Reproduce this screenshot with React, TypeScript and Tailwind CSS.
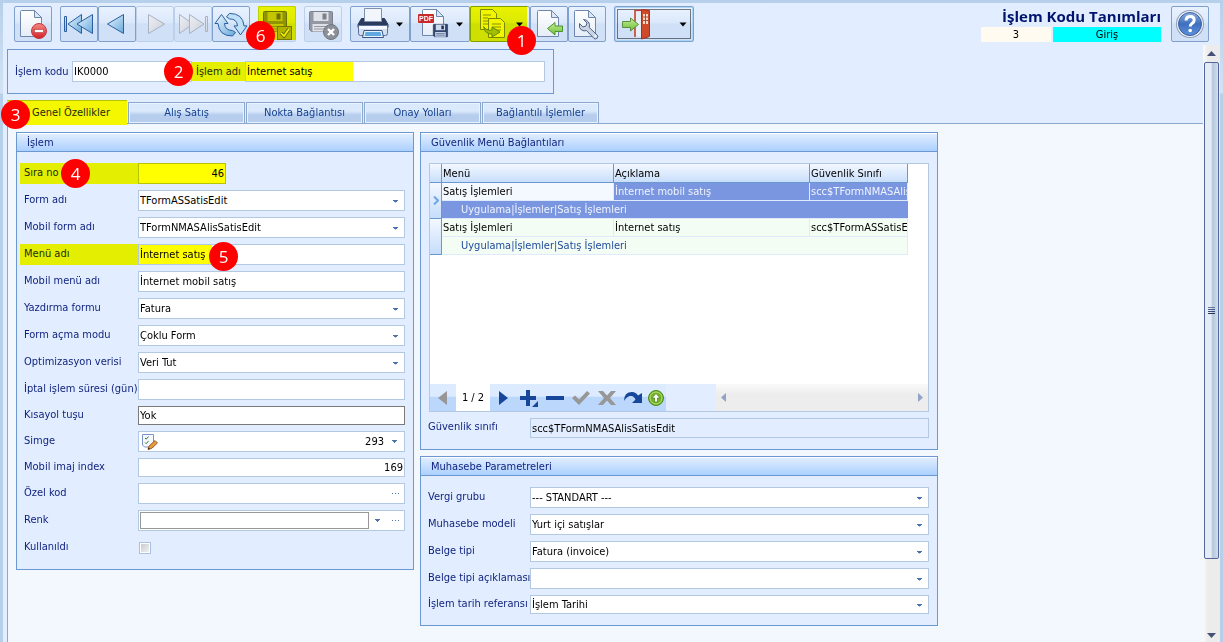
import { useId, type ReactNode } from "react";

/* ---------- shared pieces ---------- */

function Badge({ n, className }: { n: number; className: string }) {
  return (
    <span
      className={`absolute z-20 flex size-[29px] items-center justify-center rounded-full bg-[#fe0000] font-['Open_Sans','Noto_Sans',sans-serif] text-[17px] leading-none text-white ${className}`}
    >
      {n}
    </span>
  );
}

function Caret({ className = "" }: { className?: string }) {
  return (
    <svg viewBox="0 0 5 3" className={`h-[3px] w-[5px] fill-[#4a74ab] ${className}`} shapeRendering="crispEdges">
      <path d="M0 0h5v1h-1v1h-1v1h-1v-1h-1v-1h-1z" />
    </svg>
  );
}

function Dots() {
  return (
    <svg viewBox="0 0 7 1" className="h-px w-[7px] fill-[#4a74ab]" shapeRendering="crispEdges">
      <path d="M0 0h1v1h-1zM3 0h1v1h-1zM6 0h1v1h-1z" />
    </svg>
  );
}

const LEFT = "grid-cols-[114px_minmax(0,1fr)]";
const RIGHT = "grid-cols-[102px_minmax(0,1fr)] -ml-px";
const FRAME = "w-full min-w-0 border text-black outline-none";
const BOX = `${FRAME} border-[#b3c8e3] bg-white`;

function Row({ label, id, hot, cols, children, badge }: { label: string; id: string; hot?: boolean; cols: string; children: ReactNode; badge?: ReactNode }) {
  return (
    <div className={`relative grid ${cols}`}>
      <label
        htmlFor={id}
        className={`flex items-center whitespace-nowrap pb-0.5 ${hot ? "-ml-1 bg-[#e3ee00] pl-1 text-[#1c2b10]" : "text-[#0d1f7c]"}`}
      >
        {label}
      </label>
      {children}
      {badge}
    </div>
  );
}

function TextRow({ label, value, cols = LEFT, field = "h-[21px] px-px", frame = BOX }: { label: string; value: string; cols?: string; field?: string; frame?: string }) {
  const id = useId();
  return (
    <Row label={label} id={id} cols={cols}>
      <input id={id} defaultValue={value} className={`${frame} ${field}`} />
    </Row>
  );
}

function SelectRow({ label, value, cols = LEFT, field = "h-[21px]" }: { label: string; value: string; cols?: string; field?: string }) {
  const id = useId();
  return (
    <Row label={label} id={id} cols={cols}>
      <div className="relative flex">
        <select id={id} defaultValue={value} className={`${BOX} appearance-none px-px ${field}`}>
          <option>{value}</option>
        </select>
        <Caret className="pointer-events-none absolute top-1/2 right-[7px] -translate-y-1/2" />
      </div>
    </Row>
  );
}

function Panel({ title, children }: { title: string; children: ReactNode }) {
  return (
    <section className="border border-[#6b98d0] bg-[#e2eeff]">
      <h2 className="flex h-[19px] items-center border-t border-b border-t-white border-b-[#6b98d0] bg-linear-to-b from-[#e0edff] to-[#acd0ff] px-2.5 text-[#0d1f7c]">
        {title}
      </h2>
      {children}
    </section>
  );
}

/* ---------- toolbar ---------- */

function ToolButton({ label, w = "w-[38px]", faded, children, look = "" }: { label: string; w?: string; faded?: boolean; children: ReactNode; look?: string }) {
  return (
    <button
      type="button"
      aria-label={label}
      disabled={faded}
      className={`relative h-9 shrink-0 rounded-xs border bg-linear-to-b from-[#e9f2ff] from-0% via-[#dce9fb] via-45% to-[#cfe0f7] to-50% ${faded ? "border-[#bdd0ea]" : "border-[#7fa0cb]"} ${w} ${look}`}
    >
      {children}
    </button>
  );
}

function Glyph({ children, w = 38 }: { children: ReactNode; w?: number }) {
  return (
    <svg viewBox={`0 0 ${w} 36`} className="absolute -top-px -left-px h-9 w-[calc(100%+2px)]">
      {children}
    </svg>
  );
}

function Sheet({ x = 0, y = 0 }: { x?: number; y?: number }) {
  return (
    <g transform={`translate(${x} ${y})`}>
      <path d="M.5 1.500Q.5.5 1.500.5H14.500L21.500 7.500V26.500H.5Z" fill="url(#sheet)" stroke="#6f87ad" />
      <path d="M14.500.5V7.500H21.500Z" fill="#dce7f5" stroke="#6f87ad" strokeLinejoin="round" />
    </g>
  );
}

function Floppy({ x = 0, y = 0, s = 1, body, edge, label }: { x?: number; y?: number; s?: number; body: string; edge: string; label: string }) {
  return (
    <g transform={`translate(${x} ${y}) scale(${s})`}>
      <path d="M.5 1.500Q.5.5 1.500.5H22.500Q23.500.5 23.500 1.500V20.500H2.500L.5 18.500Z" fill={body} stroke={edge} />
      <rect x="4.500" y="1" width="15" height="9" fill={label} />
      <rect x="13.500" y="2.500" width="4" height="6" fill={edge} />
      <rect x="3.500" y="13" width="17" height="7.500" fill={label} />
      <path d="M5 15.500h14M5 18h14" stroke={body} />
    </g>
  );
}

function Defs() {
  return (
    <svg className="absolute size-0" aria-hidden="true">
      <defs>
        <linearGradient id="sheet" x1="0" y1="0" x2="0" y2="1">
          <stop offset="0" stopColor="#ffffff" />
          <stop offset="1" stopColor="#e6edf7" />
        </linearGradient>
        <linearGradient id="blue" x1="0" y1="0" x2="1" y2="1">
          <stop offset="0" stopColor="#eef8ff" />
          <stop offset="1" stopColor="#66a9da" />
        </linearGradient>
        <linearGradient id="grey" x1="0" y1="0" x2="1" y2="1">
          <stop offset="0" stopColor="#eef0f4" />
          <stop offset="1" stopColor="#cbd0d8" />
        </linearGradient>
        <linearGradient id="green" x1="0" y1="0" x2="0" y2="1">
          <stop offset="0" stopColor="#c5ee9a" />
          <stop offset="1" stopColor="#6cbf35" />
        </linearGradient>
        <linearGradient id="red" x1="0" y1="0" x2="0" y2="1">
          <stop offset="0" stopColor="#f58b86" />
          <stop offset="1" stopColor="#d31f26" />
        </linearGradient>
        <linearGradient id="help" x1="0" y1="0" x2="0" y2="1">
          <stop offset="0" stopColor="#8fb0e2" />
          <stop offset=".5" stopColor="#3f6fbd" />
          <stop offset="1" stopColor="#5c92dc" />
        </linearGradient>
      </defs>
    </svg>
  );
}

const menuCaret = <path d="M46 16.500h7l-3.500 4z" fill="#000" />;
const cycleArrow = "M9.500 8.500 3 17.500H6Q7 30 20.500 30L23.500 26.500 20.500 24.500Q13 24.500 12.500 17.500H16Z";

function Toolbar() {
  const blue = { fill: "url(#blue)", stroke: "#2c5fa0", strokeLinejoin: "round" as const };
  const grey = { fill: "url(#grey)", stroke: "#a9b2c0", strokeLinejoin: "round" as const };
  return (
    <div role="toolbar" aria-label="Araçlar" className="flex gap-2">
      <ToolButton label="Sil">
        <Glyph>
          <Sheet x={6} y={4} />
          <circle cx="25" cy="25" r="7.500" fill="url(#red)" stroke="#c43a3f" />
          <rect x="20.500" y="23.500" width="9" height="3" fill="#fff" stroke="#b3383c" strokeWidth=".6" />
        </Glyph>
      </ToolButton>

      <div className="flex">
        <ToolButton label="İlk">
          <Glyph>
            <path d="M4.500 10.500h2v15h-2z" {...blue} />
            <path d="M8 18 21.500 8.500v19z" {...blue} />
            <path d="M17 18 32.500 8.500v19z" {...blue} />
          </Glyph>
        </ToolButton>
        <ToolButton label="Önceki">
          <Glyph>
            <path d="M9.500 18 25.500 8.500v19z" {...blue} />
          </Glyph>
        </ToolButton>
        <ToolButton label="Sonraki" faded>
          <Glyph>
            <path d="M28.500 18 12.500 8.500v19z" {...grey} />
          </Glyph>
        </ToolButton>
        <ToolButton label="Son" faded>
          <Glyph>
            <path d="M19 18 5.500 8.500v19z" {...grey} />
            <path d="M30 18 15.500 8.500v19z" {...grey} />
            <path d="M31.500 10.500h2v15h-2z" {...grey} />
          </Glyph>
        </ToolButton>
        <ToolButton label="Yenile">
          <Glyph>
            <path d={cycleArrow} {...blue} />
            <path d={cycleArrow} transform="rotate(180 19 18.700)" fill="#bfe0f6" stroke="#2c5fa0" strokeLinejoin="round" />
          </Glyph>
        </ToolButton>
      </div>

      <div className="relative flex">
        <ToolButton label="Kaydet" faded>
          <Glyph>
            <Floppy x={5} y={5} body="#90949c" edge="#6c7078" label="#c4c6ca" />
            <rect x="19.500" y="20.500" width="14" height="13" fill="#b0b2b5" stroke="#74777c" />
            <path d="M23 27l3 3 5-7" fill="none" stroke="#6c7078" strokeWidth="3.600" />
            <path d="M23 27l3 3 5-7" fill="none" stroke="#f4f4f4" strokeWidth="1.600" />
          </Glyph>
        </ToolButton>
        <span className="pointer-events-none absolute top-0 right-0 bottom-0.5 left-0 bg-[#ffff00] mix-blend-multiply" />
        <Badge n={6} className="top-[15px] -left-3" />
      </div>

      <ToolButton label="Kaydetme" faded>
        <Glyph>
          <Floppy x={5} y={5} body="#9498a2" edge="#7d818b" label="#dfe2e8" />
          <circle cx="27" cy="26" r="7.500" fill="#8c9099" stroke="#71757e" />
          <path d="m24 23 6 6m0-6-6 6" stroke="#fff" strokeWidth="2.400" />
        </Glyph>
      </ToolButton>

      <div className="flex">
        <ToolButton label="Yazdır" w="w-[60px]">
          <Glyph w={60}>
            <path d="M11.500 12.500h23l3.500 6v3H8v-3z" fill="#2c3a5c" stroke="#2c3a5c" strokeLinejoin="round" />
            <path d="M14.500 2.500h17v13h-17z" fill="#f2f6fc" stroke="#7f90b0" />
            <path d="M8.500 19.500h29v8q0 2-2 2h-25q-2 0-2-2z" fill="#d3def0" stroke="#5b6f98" />
            <path d="M9 20h28v3H9z" fill="#f6f9fe" />
            <path d="M14 24.500h18l1.500 7h-21z" fill="#e6f2fc" stroke="#3d5586" />
            <path d="M15.500 26h15l.8 4H14.700z" fill="#5fa8e0" />
            {menuCaret}
          </Glyph>
        </ToolButton>
        <ToolButton label="PDF" w="w-[60px]">
          <Glyph w={60}>
            <Sheet x={12} y={3} />
            <rect x="8" y="8" width="16" height="9" rx="1" fill="#cb2a2c" />
            <text x="16" y="15" fontSize="7" fontWeight="700" textAnchor="middle" fill="#fff" fontFamily="Liberation Sans">
              PDF
            </text>
            <Floppy x={23} y={18} s={0.62} body="#33466f" edge="#1f2f55" label="#cfdcf0" />
            {menuCaret}
          </Glyph>
        </ToolButton>
        <div className="relative flex">
          <ToolButton label="Kopyala" w="w-[60px]">
            <Glyph w={60}>
              <path d="M10.500 3.500h12l4 4v16h-16z" fill="#f1f5fa" stroke="#7c8797" />
              <path d="M13 9h8M13 12h5M13 15h5M13 18h5" stroke="#8592a6" />
              <path d="M18.500 12.500h12l4 4v15h-16z" fill="#f1f5fa" stroke="#7c8797" />
              <path d="M22 18h9M22 21h9M22 24h9" stroke="#8592a6" />
              <path d="M13.500 20.500q3 4.500 8.500 3.500v-3l8 5-8 5v-3q-7 .5-8.500-7.500z" fill="#a3bf6c" stroke="#5f8a44" strokeLinejoin="round" />
              {menuCaret}
            </Glyph>
          </ToolButton>
          <span className="pointer-events-none absolute inset-y-0 right-[3px] left-0 bg-[#ffff00] mix-blend-multiply" />
          <Badge n={1} className="top-5 right-[-6px]" />
        </div>
        <ToolButton label="Aktar">
          <Glyph>
            <Sheet x={7} y={4} />
            <path d="M17.500 22.500 25 16.500v3.500h7.500v5.500H25V29z" fill="url(#green)" stroke="#4b9230" strokeLinejoin="round" />
          </Glyph>
        </ToolButton>
        <ToolButton label="Ayarlar">
          <Glyph>
            <Sheet x={6} y={4} />
            <path
              d="M15.500 13.500l3.500 3.500-1 3-3 1-3.500-3.500q-1 4.500 2 6.500 2.500 1.500 5 .5l7.500 8q1.500 1.200 3.200-.3 1.300-1.500 0-3.200l-8-7.500q1-3-.7-5.500-2-2.500-5-2.500z"
              fill="#c9d4e4"
              stroke="#4f6388"
              strokeLinejoin="round"
            />
            <circle cx="27.500" cy="30" r="1" fill="#fff" />
          </Glyph>
        </ToolButton>
      </div>

      <ToolButton label="Çıkış" w="w-20" look="ring-1 ring-inset ring-[#a9d6f7]">
        <Glyph w={80}>
          <rect x="3.500" y="3.500" width="73" height="29" fill="none" stroke="#000" strokeDasharray="1 1" />
          <path d="M21 31V4.500h14" fill="none" stroke="#c9402f" strokeWidth="1.600" />
          <path d="M22 5.500h5v25h-5z" fill="#e8eef6" />
          <path d="M27.500 3.500l8 1v26l-8 2.500z" fill="#cf4a2b" stroke="#a5331d" />
          <path d="M29 8h5v10h-5z" fill="#f4dcc9" />
          <path d="M31.500 8v10M29 11h5M29 14.500h5" stroke="#b44a2f" />
          <path d="M8.500 15.500h8v-3.500l8 6.500-8 6.500v-3.500h-8z" fill="url(#green)" stroke="#5a8f3e" strokeLinejoin="round" />
          <path d="M65.500 16.500h7l-3.500 4z" fill="#000" />
        </Glyph>
      </ToolButton>
    </div>
  );
}

function Header() {
  return (
    <header className="flex justify-between px-[11px] py-[3px]">
      <Toolbar />
      <div className="flex gap-2.5">
        <div className="flex w-[180px] flex-col justify-between">
          <h1 className="text-right font-['Open_Sans','Noto_Sans',sans-serif] text-[15px] leading-5 font-bold whitespace-nowrap text-[#00146e]">
            İşlem Kodu Tanımları
          </h1>
          <div className="grid grid-cols-[70px_1fr] gap-0.5 text-center leading-[15px] text-black">
            <span className="bg-[#fffbf0]">3</span>
            <span className="bg-[#00ffff]">Giriş</span>
          </div>
        </div>
        <ToolButton label="Yardım">
          <Glyph>
            <circle cx="19" cy="18" r="14" fill="#8f9db8" />
            <circle cx="19" cy="18" r="13" fill="#f2f5fa" />
            <circle cx="19" cy="18" r="11.500" fill="url(#help)" stroke="#3a5f9f" />
            <path d="M15 14.500q.3-4 4.200-4 4 0 4 3.500 0 2-2.200 3.500-1.800 1.200-1.800 3" fill="none" stroke="#fff" strokeWidth="3" />
            <circle cx="19.200" cy="24.500" r="1.800" fill="#fff" />
          </Glyph>
        </ToolButton>
      </div>
    </header>
  );
}

/* ---------- upper form and tabs ---------- */

function CodeBar() {
  return (
    <div className="mt-1 ml-1 flex h-[45px] w-[547px] items-center border border-[#6b98d0] pr-2 pl-[7px]">
      <label htmlFor="code" className="w-[57px] shrink-0 whitespace-nowrap text-[#0d1f7c]">
        İşlem kodu
      </label>
      <div className="flex w-[120px] shrink-0">
        <input id="code" defaultValue="IK0000" className={`${BOX} h-[21px] px-px`} />
      </div>
      <div className="relative flex flex-1">
        <label htmlFor="name" className="my-px flex w-[53px] shrink-0 items-center bg-[#e3ee00] pl-1 whitespace-nowrap text-[#1c2b10]">
          İşlem adı
        </label>
        <input
          id="name"
          defaultValue="İnternet satış"
          className={`${BOX} h-[21px] bg-[linear-gradient(#ffff00,#ffff00)] bg-[length:107px_100%] bg-no-repeat px-px`}
        />
        <Badge n={2} className="-top-1 -left-7" />
      </div>
    </div>
  );
}

function Tabs() {
  const others = ["Alış Satış", "Nokta Bağlantısı", "Onay Yolları", "Bağlantılı İşlemler"];
  return (
    <div role="tablist" className="relative mt-1.5 ml-1 flex h-6 items-end gap-px border-b border-[#8ba8cf]">
      <button
        type="button"
        role="tab"
        aria-selected="true"
        className="relative z-10 -mb-0.5 h-[25px] w-[120px] border-t border-[#b5c400] bg-[#f4f700] pl-2 text-[#1c2b10]"
      >
        Genel Özellikler
      </button>
      {others.map((t) => (
        <button
          key={t}
          type="button"
          role="tab"
          aria-selected="false"
          className="h-[21px] w-[117px] border border-b-0 border-[#8ba8cf] bg-linear-to-b from-[#dbe9fc] from-40% to-[#b6cdee] to-60% text-[#15418f] ring-1 ring-inset ring-[#eaf2fd]"
        >
          {t}
        </button>
      ))}
      <Badge n={3} className="-bottom-1.5 -left-1.5" />
    </div>
  );
}

/* ---------- left panel ---------- */

function OperationPanel() {
  return (
    <Panel title="İşlem">
      <div className="flex flex-col gap-1.5 pt-[11px] pr-2 pb-[11px] pl-[7px]">
        <Row label="Sıra no" id="order" hot cols={LEFT} badge={<Badge n={4} className="-top-1 left-[37px]" />}>
          <input
            id="order"
            defaultValue="46"
            className="h-[21px] w-[88px] border border-[#b9c400] bg-[#ffff00] px-px text-right text-black outline-none"
          />
        </Row>
        <SelectRow label="Form adı" value="TFormASSatisEdit" />
        <SelectRow label="Mobil form adı" value="TFormNMASAlisSatisEdit" />
        <Row label="Menü adı" id="menu" hot cols={LEFT} badge={<Badge n={5} className="-top-0.5 left-[185px]" />}>
          <input
            id="menu"
            defaultValue="İnternet satış"
            className={`${BOX} h-[21px] bg-[linear-gradient(#ffff00,#ffff00)] bg-[length:73px_100%] bg-no-repeat px-px`}
          />
        </Row>
        <TextRow label="Mobil menü adı" value="İnternet mobil satış" />
        <SelectRow label="Yazdırma formu" value="Fatura" />
        <SelectRow label="Form açma modu" value="Çoklu Form" />
        <SelectRow label="Optimizasyon verisi" value="Veri Tut" />
        <TextRow label="İptal işlem süresi (gün)" value="" />
        <TextRow label="Kısayol tuşu" value="Yok" frame={`${FRAME} border-[#7a7a7a] bg-white`} field="h-[19px] px-px" />
        <Row label="Simge" id="icon" cols={LEFT}>
          <div className={`${BOX} flex h-[21px] items-center pr-[7px] pl-[3px]`}>
            <svg viewBox="0 0 16 16" className="size-4 shrink-0">
              <path d="M.5.500h11v12.500h-9l-2-2z" fill="#f5f9ff" stroke="#7d92c8" />
              <path d="m3 4 1.200 1.200L6.500 2.500M3 8.500l1.200 1.200L6.500 7" fill="none" stroke="#2f7d32" />
              <path d="M6 15.500l1-3.500 6-5.500 2.500 2.500-6 5.500z" fill="#e79a3c" stroke="#8a4b1c" strokeWidth=".8" />
              <path d="m6 15.500.6-2 1.500 1.300z" fill="#222" />
            </svg>
            <input id="icon" defaultValue="293" className="min-w-0 flex-1 pr-2 text-right outline-none" />
            <Caret />
          </div>
        </Row>
        <TextRow label="Mobil imaj index" value="169" field="h-[19px] px-px text-right" />
        <Row label="Özel kod" id="special" cols={LEFT}>
          <div className={`${BOX} flex h-[21px] items-center pr-[5px]`}>
            <input id="special" className="min-w-0 flex-1 outline-none" />
            <Dots />
          </div>
        </Row>
        <Row label="Renk" id="color" cols={LEFT}>
          <div className={`${BOX} flex h-[21px] items-center pr-[5px] pl-px`}>
            <input id="color" className="h-[17px] min-w-0 flex-1 border border-[#989898] outline-none" />
            <Caret className="mr-3 ml-1.5" />
            <Dots />
          </div>
        </Row>
        <Row label="Kullanıldı" id="used" cols={LEFT}>
          <div className="flex h-[21px] items-center">
            <input
              id="used"
              type="checkbox"
              className="ml-px size-3 appearance-none border border-[#a9c1e0] bg-linear-to-br from-[#c4c8cd] to-[#f4f4f4] ring-1 ring-inset ring-white"
            />
          </div>
        </Row>
      </div>
    </Panel>
  );
}

/* ---------- right panels ---------- */

const TH = "truncate border-r border-b border-[#6b98d0] p-0 pl-px text-left font-normal";
const INDICATOR = "border-r border-b border-[#6b98d0] bg-linear-to-b from-[#f3f8ff] to-[#c6ddfb] p-0";
const CELL = "overflow-hidden whitespace-nowrap border-r border-b border-[#dfeafa] p-0 pl-px";

function SecurityGrid() {
  return (
    <div className="border border-[#b3c8e3] bg-white">
      <div className="h-[220px]">
        <table className="w-[478px] table-fixed border-separate border-spacing-0 leading-[17px] text-black">
          <colgroup>
            <col className="w-3" />
            <col className="w-[172px]" />
            <col className="w-[196px]" />
            <col className="w-[98px]" />
          </colgroup>
          <thead>
            <tr className="h-[19px] bg-linear-to-b from-[#f3f8ff] to-[#c6ddfb]">
              <th aria-label="Durum" className={TH} />
              <th className={TH}>Menü</th>
              <th className={TH}>Açıklama</th>
              <th className={TH}>Güvenlik Sınıfı</th>
            </tr>
          </thead>
          <tbody>
            <tr className="h-[18px] bg-[#7b96e0] text-[#eef3ff]">
              <td rowSpan={2} className={INDICATOR}>
                <svg viewBox="0 0 6 9" className="mx-auto h-[9px] w-1.5">
                  <path d="m1 .5 4 4-4 4" fill="none" stroke="#6ea5ea" strokeWidth="2" />
                </svg>
              </td>
              <td className={`${CELL} bg-[#f4f9ff] text-black`}>Satış İşlemleri</td>
              <td className={CELL}>İnternet mobil satış</td>
              <td className={CELL}>scc$TFormNMASAlisSatisEdit</td>
            </tr>
            <tr className="h-[18px] bg-[#7b96e0] text-[#eef3ff]">
              <td colSpan={3} className="border-b border-[#dfeafa] p-0 pl-[19px]">
                Uygulama|İşlemler|Satış İşlemleri
              </td>
            </tr>
            <tr className="h-[18px] bg-[#f4fdf4]">
              <td rowSpan={2} className={INDICATOR} />
              <td className={CELL}>Satış İşlemleri</td>
              <td className={CELL}>İnternet satış</td>
              <td className={CELL}>scc$TFormASSatisEdit</td>
            </tr>
            <tr className="h-[18px] bg-[#f4fdf4] text-[#1e4a9c]">
              <td colSpan={3} className="border-r border-b border-[#dfeafa] p-0 pl-[19px]">
                Uygulama|İşlemler|Satış İşlemleri
              </td>
            </tr>
          </tbody>
        </table>
      </div>
      <Navigator />
    </div>
  );
}

function NavButton({ label, w = "w-[26px]", children }: { label: string; w?: string; children: ReactNode }) {
  return (
    <button type="button" aria-label={label} className={`flex h-full items-center justify-center ${w}`}>
      <svg viewBox="0 0 20 18" className="h-[18px] w-5 shrink-0">
        {children}
      </svg>
    </button>
  );
}

function Navigator() {
  return (
    <div className="flex h-[27px]">
      <div className="flex bg-linear-to-b from-[#dcebff] from-45% to-[#bbd7fc] to-50%">
        <NavButton label="Önceki kayıt">
          <path d="M14 2v14L5 9z" fill="#979797" />
        </NavButton>
        <span className="flex w-[34px] items-center justify-center bg-white text-black">1 / 2</span>
        <NavButton label="Sonraki kayıt">
          <path d="M6 2v14l9-7z" fill="#16479a" />
        </NavButton>
        <NavButton label="Ekle">
          <path d="M7 1h4v6h6v4h-6v6H7v-6H1V7h6z" fill="#16479a" />
          <path d="M19 12v6h-6z" fill="#16479a" />
        </NavButton>
        <NavButton label="Çıkar">
          <path d="M1 7h18v4H1z" fill="#16479a" />
        </NavButton>
        <NavButton label="Onayla">
          <path d="m1 9 3-2.500 4 4L16 2l3 2.500L8 16z" fill="#979797" />
        </NavButton>
        <NavButton label="Vazgeç">
          <path d="M1 2h5l4 4.500L14 2h5l-6 7 6 7h-5l-4-4.500L6 16H1l6-7z" fill="#979797" />
        </NavButton>
        <NavButton label="Yenile">
          <path d="M1 12Q1 3 9 3q4 0 6 3.500L19 4v10H9l3.500-3.500Q11 7 8 7q-4 0-7 5z" fill="#16479a" />
        </NavButton>
        <NavButton label="Yukarı" w="w-5">
          <circle cx="10" cy="9" r="7.500" fill="#76b52b" stroke="#4c8a16" />
          <circle cx="10" cy="9" r="6" fill="none" stroke="#b5de75" />
          <path d="M10 4.500 5.800 9H8.500v4h3V9h2.700z" fill="#fff" stroke="#4c8a16" strokeWidth=".8" />
        </NavButton>
      </div>
      <div className="flex-1 bg-[#e2eeff]" />
      <div className="flex w-[212px] items-center justify-between bg-linear-to-b from-[#fafafa] to-[#ededed] to-40% px-[5px]">
        <svg viewBox="0 0 5 9" className="h-[9px] w-[5px] fill-[#93a3c8]">
          <path d="M5 0v9L0 4.500z" />
        </svg>
        <svg viewBox="0 0 5 9" className="h-[9px] w-[5px] fill-[#93a3c8]">
          <path d="M0 0v9l5-4.500z" />
        </svg>
      </div>
    </div>
  );
}

function SecurityPanel() {
  return (
    <Panel title="Güvenlik Menü Bağlantıları">
      <div className="flex flex-col gap-1.5 px-2 pt-[11px] pb-[11px]">
        <SecurityGrid />
        <TextRow
          label="Güvenlik sınıfı"
          value="scc$TFormNMASAlisSatisEdit"
          cols={RIGHT}
          frame={`${FRAME} border-[#b3c8e3] bg-[#e2eeff]`}
          field="h-5 px-px"
        />
      </div>
    </Panel>
  );
}

function AccountingPanel() {
  return (
    <Panel title="Muhasebe Parametreleri">
      <div className="flex flex-col gap-1.5 px-2 pt-[11px] pb-[11px]">
        <SelectRow label="Vergi grubu" value="--- STANDART ---" cols={RIGHT} />
        <SelectRow label="Muhasebe modeli" value="Yurt içi satışlar" cols={RIGHT} />
        <SelectRow label="Belge tipi" value="Fatura (invoice)" cols={RIGHT} />
        <SelectRow label="Belge tipi açıklaması" value="" cols={RIGHT} />
        <SelectRow label="İşlem tarih referansı" value="İşlem Tarihi" cols={RIGHT} field="h-[19px]" />
      </div>
    </Panel>
  );
}

function ScrollTrack() {
  return (
    <div className="flex w-4 shrink-0 flex-col items-center bg-linear-to-r from-[#fafafa] to-[#ececec] to-30%">
      <svg viewBox="0 0 9 5" className="mt-1.5 mb-1.5 h-[5px] w-[9px] shrink-0 fill-[#465078]">
        <path d="M0 5h9L4.500 0z" />
      </svg>
      <div className="flex w-[15px] flex-[498_1_0] items-center justify-center rounded-xs border border-[#55659a] bg-linear-to-r from-[#e4edf6] from-45% via-[#b4c7dc] via-60% to-[#d3e0ee]">
        <div className="flex flex-col gap-px">
          <i className="h-px w-[7px] bg-[#6a78a0]" />
          <i className="h-px w-[7px] bg-[#4a5a88]" />
          <i className="h-px w-[7px] bg-[#3a4a78]" />
          <i className="h-px w-[7px] bg-[#2a3458]" />
        </div>
      </div>
      <div className="flex-[74_1_0]" />
      <svg viewBox="0 0 9 5" className="mb-1 h-[5px] w-[9px] shrink-0 fill-[#465078]">
        <path d="M0 0h9L4.500 5z" />
      </svg>
    </div>
  );
}

export default function App() {
  return (
    <div className="flex min-h-screen flex-col bg-[linear-gradient(#b6cfea_0px,#d3e3f5_93px,#b7d0ea_94px)] px-[3px] pt-[3px] font-['DejaVu_Sans_Condensed','Noto_Sans',sans-serif] text-[11px] leading-[14px]">
      <Defs />
      <div className="flex flex-1 flex-col bg-[#e2eeff]">
        <Header />
        <div className="flex flex-1 pr-px">
          <main className="flex min-w-0 flex-1 flex-col">
            <CodeBar />
            <Tabs />
            <div className="ml-1 flex flex-1 items-start gap-1.5 border-l border-[#8ba8cf] bg-[#f3f8ff] pt-2 pb-4 pl-2">
              <div className="w-[398px] shrink-0">
                <OperationPanel />
              </div>
              <div className="flex w-[518px] shrink-0 flex-col gap-1.5">
                <SecurityPanel />
                <AccountingPanel />
              </div>
            </div>
          </main>
          <ScrollTrack />
        </div>
      </div>
    </div>
  );
}
